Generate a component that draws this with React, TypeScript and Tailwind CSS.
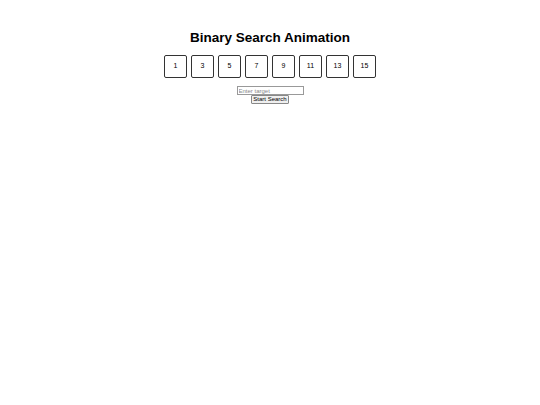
import React, { useState } from 'react';

const nums = [1, 3, 5, 7, 9, 11, 13, 15];

export default function App() {
    const [target, setTarget] = useState('');

    return (
        <div className="flex flex-col items-center bg-white w-full min-h-[405px] font-['Liberation_Sans',Arial,sans-serif] text-black">
            <h1 className="mt-[29px] text-[13.5px] leading-[17px] font-bold">Binary Search Animation</h1>
            <div className="flex gap-[4px] mt-[9px]">
                {nums.map((n) => (
                    <div key={n} className="w-[23px] h-[23px] border border-[#333] rounded-[2px] flex items-center justify-center text-[7px]">
                        {n}
                    </div>
                ))}
            </div>
            <input
                value={target}
                onChange={(e) => setTarget(e.target.value)}
                placeholder="Enter target"
                className="mt-[8px] w-[67px] h-[9px] border border-[#999] px-[1px] text-[6px] leading-[7px] placeholder:text-[#888] outline-none"
            />
            <button className="w-[38px] h-[9px] border border-[#888] bg-[#efefef] rounded-[1px] text-[6px] leading-[7px] flex items-center justify-center">
                Start Search
            </button>
        </div>
    );
}
